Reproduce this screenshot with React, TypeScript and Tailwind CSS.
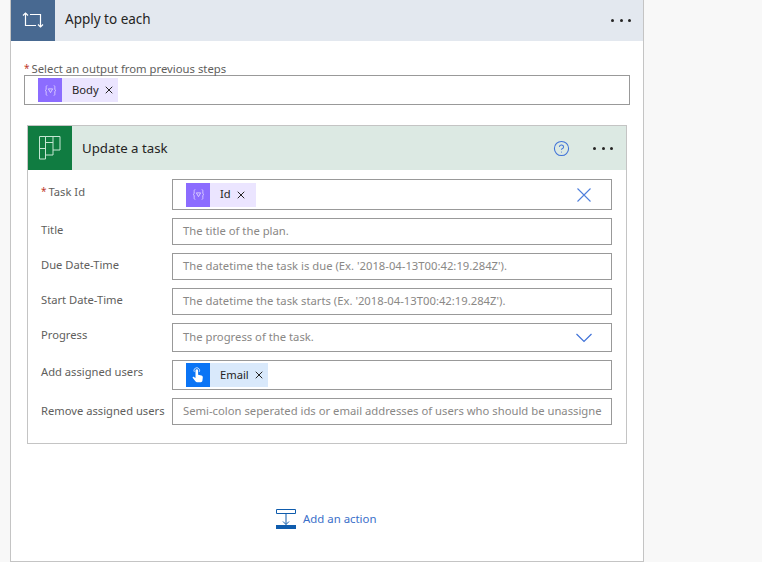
import { CircleHelp, X } from "lucide-react"
import type { ReactNode } from "react"

function VarIcon() {
  return (
    <svg width="13" height="13" viewBox="0 0 12 12" fill="none" stroke="#d9ccff" strokeWidth="0.9">
      <path d="M3 1.500c-1 0-1 .7-1 1.600v1.500C2 5.500 1.500 6 1 6c.5 0 1 .5 1 1.400v1.500c0 .9 0 1.600 1 1.600" />
      <path d="M9 1.500c1 0 1 .7 1 1.600v1.500c0 .9.5 1.400 1 1.400-.5 0-1 .5-1 1.400v1.500c0 .9 0 1.600-1 1.600" />
      <path d="M4 4.500h4L6 8z" />
    </svg>
  )
}

function TouchIcon() {
  return (
    <svg width="14" height="17" viewBox="0 0 14 17" fill="white">
      <path d="M4.500 3.500a1.300 1.300 0 0 1 2.600 0v4.200l3.300.9c1 .3 1.500 1 1.400 2l-.4 3.200c-.1.800-.7 1.400-1.600 1.400H6c-.6 0-1-.2-1.400-.7L1.800 11c-.5-.7.3-1.600 1.100-1.100l1.600 1.100z" />
      <path d="M3.300 4.800a2.800 2.800 0 1 1 5 0" fill="none" stroke="white" strokeWidth="0.8" />
    </svg>
  )
}

function Token({ label, kind }: { label: string; kind: "variable" | "trigger" }) {
  const isVar = kind === "variable"
  return (
    <div className={`flex h-6 min-w-[70px] items-center ${isVar ? "bg-[#ebe5ff]" : "bg-[#d9e9fb]"}`}>
      <div className={`flex h-6 w-6 items-center justify-center ${isVar ? "bg-[#8c6cff]" : "bg-[#0a74f5]"}`}>
        {isVar ? <VarIcon /> : <TouchIcon />}
      </div>
      <span className="ml-[10px] text-[11.200px] text-[#252423]">{label}</span>
      <X className="ml-[4px] mr-[3px] h-[12px] w-[12px] text-[#252423]" strokeWidth={2} />
    </div>
  )
}

function Required() {
  return <span className="mr-[2px] align-[1px] text-[10px] text-[#c0392b]">*</span>
}

function Row({
  label,
  required,
  boxClass,
  labelClass,
  children,
}: {
  label: string
  required?: boolean
  boxClass: string
  labelClass: string
  children: ReactNode
}) {
  return (
    <div className="flex">
      <div className={`w-[144px] shrink-0 whitespace-nowrap pl-[13px] text-[11.200px] leading-4 text-[#605e5c] ${labelClass}`}>
        {required && <Required />}
        {label}
      </div>
      <div className={`flex w-[440px] items-center border border-[#999999] bg-white ${boxClass}`}>{children}</div>
    </div>
  )
}

function Placeholder({ text }: { text: string }) {
  return <span className="whitespace-nowrap pl-[10px] text-[11.280px] text-[#8a8886]">{text}</span>
}

function Dots() {
  return (
    <div className="flex gap-[5.500px]">
      <span className="h-[3px] w-[3px] rounded-full bg-[#252423]" />
      <span className="h-[3px] w-[3px] rounded-full bg-[#252423]" />
      <span className="h-[3px] w-[3px] rounded-full bg-[#252423]" />
    </div>
  )
}

export default function App() {
  return (
    <div className="h-[562px] w-[762px] overflow-hidden bg-[#f8f8f8] pl-[10px] font-['Noto_Sans','Open_Sans',sans-serif]">
      <div className="flex h-[562px] w-[634px] flex-col border-r border-b border-l border-[#c4c4c4] bg-white">
        {/* Apply to each header */}
        <div className="flex h-[41px] shrink-0 items-center bg-[#e3e8ef]">
          <div className="flex h-[41px] w-[44px] items-center justify-center bg-[#486991]">
            <svg width="22" height="18" viewBox="0 0 22 18" fill="none" stroke="white" strokeWidth="1.200">
              <path d="M3.500 1V13.500H14" />
              <path d="M1 3.500 3.500 1 6 3.500" />
              <path d="M8 2.500H18.500V15" />
              <path d="M16 12.500 18.500 15 21 12.500" />
            </svg>
          </div>
          <span className="ml-[10px] pb-[2px] text-[13.500px] text-[#252423]">Apply to each</span>
          <div className="ml-auto mr-[12px]">
            <Dots />
          </div>
        </div>

        {/* Select an output */}
        <div className="mt-[21px] pl-[13px]">
          <div className="h-[13px] whitespace-nowrap text-[11.300px] leading-[13px] text-[#605e5c]">
            <Required />
            Select an output from previous steps
          </div>
          <div className="flex h-[30px] w-[606px] items-center border border-[#999999] pl-[13px]">
            <Token label="Body" kind="variable" />
          </div>
        </div>

        {/* Update a task */}
        <div className="ml-[16px] mt-[20px] h-[319px] w-[600px] border border-[#c4c4c4]">
          <div className="flex h-[44px] items-center bg-[#dce9e3]">
            <div className="flex h-[44px] w-[44px] items-center justify-center bg-[#107c41]">
              <svg width="24" height="26" viewBox="0 0 24 26" fill="none" stroke="#c5e6d3" strokeWidth="1">
                <path d="M1.500 1.500h6v22.500h-6zM1.500 13.500h6M7.500 1.500H15V20H7.500zM7.500 7.500H15M15 1.500h7V15h-7" />
              </svg>
            </div>
            <span className="ml-[10px] pt-[1px] text-[13.250px] text-[#252423]">Update a task</span>
            <CircleHelp className="ml-auto mr-[23px] h-[17px] w-[17px] text-[#3f72d8]" strokeWidth={1.500} />
            <div className="mr-[13px]">
              <Dots />
            </div>
          </div>

          <div className="flex flex-col pt-[9px]">
            <Row label="Task Id" required boxClass="h-[31px] pl-[13px]" labelClass="pt-[4px]">
              <Token label="Id" kind="variable" />
              <svg className="ml-auto mr-[20px]" width="14" height="14" viewBox="0 0 14 14" fill="none" stroke="#4f7fdc" strokeWidth="1.100">
                <path d="M.5.500l13 13M13.500.500l-13 13" />
              </svg>
            </Row>
            <div className="mt-[8px]">
              <Row label="Title" boxClass="h-[27px]" labelClass="pt-[4px]">
                <Placeholder text="The title of the plan." />
              </Row>
            </div>
            <div className="mt-[8px]">
              <Row label="Due Date-Time" boxClass="h-[27px]" labelClass="pt-[4px]">
                <Placeholder text="The datetime the task is due (Ex. '2018-04-13T00:42:19.284Z')." />
              </Row>
            </div>
            <div className="mt-[8px]">
              <Row label="Start Date-Time" boxClass="h-[27px]" labelClass="pt-[4px]">
                <Placeholder text="The datetime the task starts (Ex. '2018-04-13T00:42:19.284Z')." />
              </Row>
            </div>
            <div className="mt-[8px]">
              <Row label="Progress" boxClass="h-[29px]" labelClass="pt-[4px]">
                <Placeholder text="The progress of the task." />
                <svg className="ml-auto mr-[19px]" width="16" height="10" viewBox="0 0 16 10" fill="none" stroke="#3f72d8" strokeWidth="1.200">
                  <path d="M.5 1 8 8.500 15.500 1" />
                </svg>
              </Row>
            </div>
            <div className="mt-[8px]">
              <Row label="Add assigned users" boxClass="h-[30px] pl-[13px]" labelClass="pt-[4px]">
                <Token label="Email" kind="trigger" />
              </Row>
            </div>
            <div className="mt-[8px]">
              <Row label="Remove assigned users" boxClass="h-[27px]" labelClass="pt-[5px]">
                <Placeholder text="Semi-colon seperated ids or email addresses of users who should be unassigne" />
              </Row>
            </div>
          </div>
        </div>

        {/* Add an action */}
        <div className="mt-[64px] flex items-center pl-[264px]">
          <svg width="22" height="22" viewBox="0 0 22 22" fill="none" stroke="#0f5cad" strokeWidth="1">
            <path d="M1.500 1.500h19v4h-19zM11 5.500v11M8 13.500l3 3 3-3" />
            <path d="M1 17h20v4H1z" fill="#0f5cad" stroke="none" />
          </svg>
          <span className="ml-[6px] text-[11.400px] text-[#3b6fc9]">Add an action</span>
        </div>
      </div>
    </div>
  )
}
